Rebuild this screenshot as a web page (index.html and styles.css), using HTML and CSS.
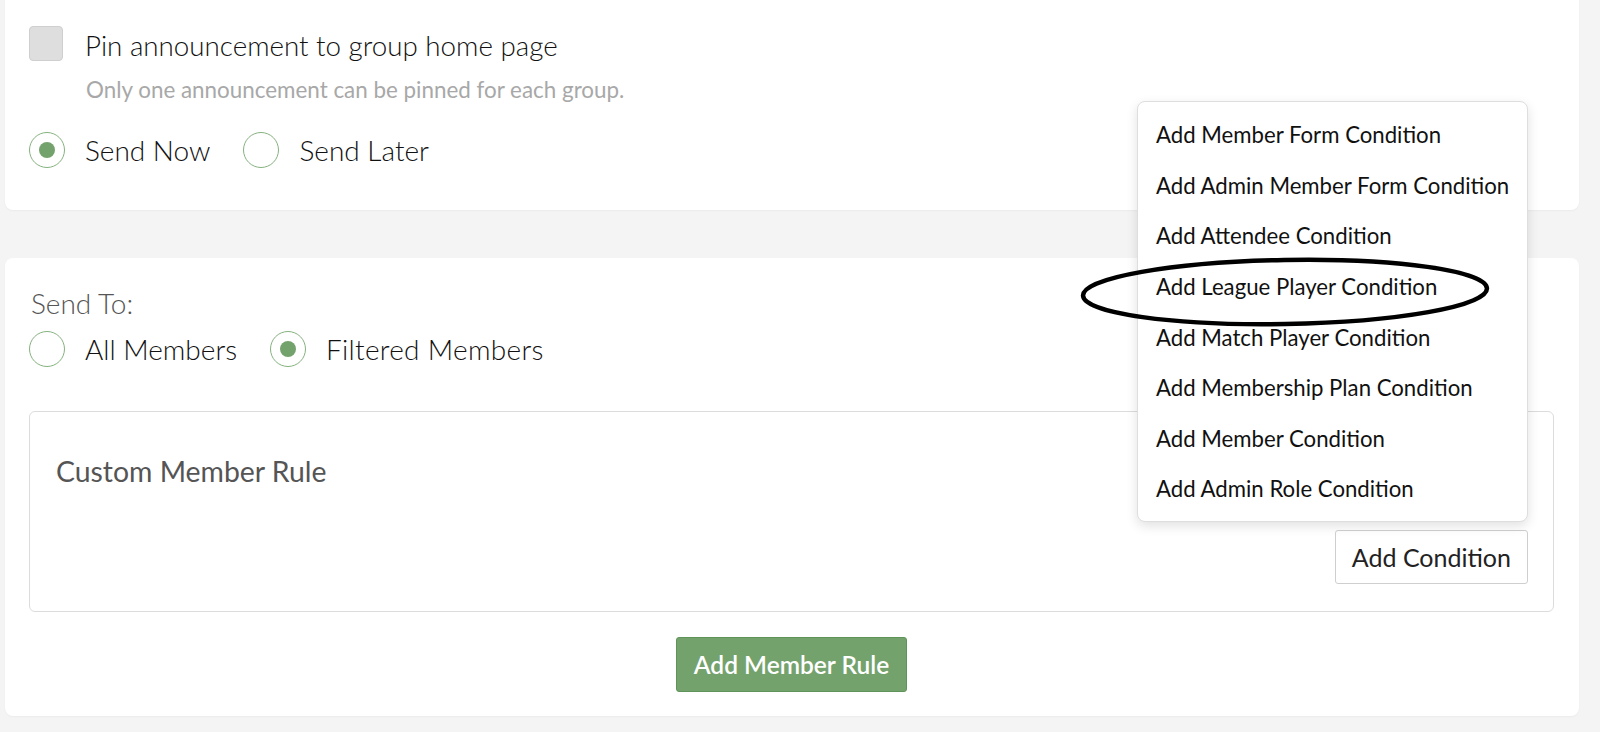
FILE: index.html
```html
<!DOCTYPE html>
<html lang="en">
<head>
<meta charset="utf-8">
<title>Announcement</title>
<link rel="stylesheet" href="styles.css">
</head>
<body>
<div class="page">
  <section class="card card-top">
    <label class="check-row">
      <span class="checkbox"></span>
      <span class="check-label">Pin announcement to group home page</span>
    </label>
    <p class="help">Only one announcement can be pinned for each group.</p>
    <div class="radio-row">
      <label class="radio-opt"><span class="radio checked"></span><span class="radio-label">Send Now</span></label>
      <label class="radio-opt"><span class="radio"></span><span class="radio-label">Send Later</span></label>
    </div>
  </section>

  <section class="card card-bottom">
    <div class="send-to">Send To:</div>
    <div class="radio-row">
      <label class="radio-opt"><span class="radio"></span><span class="radio-label">All Members</span></label>
      <label class="radio-opt"><span class="radio checked"></span><span class="radio-label wide">Filtered Members</span></label>
    </div>
    <div class="rule-box">
      <h3 class="rule-title">Custom Member Rule</h3>
      <div class="rule-actions">
        <div class="dropdown-wrap">
          <ul class="menu">
            <li>Add Member Form Condition</li>
            <li>Add Admin Member Form Condition</li>
            <li>Add Attendee Condition</li>
            <li>Add League Player Condition</li>
            <li>Add Match Player Condition</li>
            <li>Add Membership Plan Condition</li>
            <li>Add Member Condition</li>
            <li>Add Admin Role Condition</li>
          </ul>
          <button class="btn-outline">Add Condition</button>
        </div>
      </div>
    </div>
    <div class="center-row">
      <button class="btn-green">Add Member Rule</button>
    </div>
  </section>

  <svg class="annotation" width="412" height="72" viewBox="0 0 412 72">
    <ellipse cx="206" cy="36" rx="202" ry="32" fill="none" stroke="#000" stroke-width="4.5" transform="rotate(-1 206 36)"/>
  </svg>
</div>
</body>
</html>
```

FILE: styles.css
```css
* { box-sizing: border-box; }
html, body { margin: 0; padding: 0; }
body {
  background: #f4f4f4;
  font-family: Lato, "Open Sans", "Liberation Sans", sans-serif;
  color: #222;
  width: 1600px;
  height: 732px;
  overflow: hidden;
}
.page {
  position: relative;
  display: flow-root;
  padding: 0 21px 0 5px;
}
.card {
  background: #fff;
  border-radius: 8px;
  box-shadow: 0 1px 2px rgba(0,0,0,0.04);
}
.card-top {
  margin-top: -10px;
  padding: 36px 24px 42px;
}
.check-row {
  display: flex;
  align-items: center;
  height: 35px;
}
.checkbox {
  width: 34px;
  height: 35px;
  background: #dedede;
  border: 1px solid #cfcfcf;
  border-radius: 4px;
  flex: none;
}
.check-label {
  margin-left: 22px;
  font-size: 27.75px;
  font-weight: 300;
  color: #111;
  position: relative;
  top: 2px;
}
.help {
  margin: 17px 0 0 57px;
  font-size: 22.4px;
  line-height: 24px;
  color: #a8a8a8;
  font-weight: 400;
}
.radio-row {
  display: flex;
  align-items: center;
}
.card-top .radio-row { margin-top: 30px; }
.radio-opt {
  display: flex;
  align-items: center;
  height: 36px;
  margin-right: 33px;
}
.radio {
  width: 36px;
  height: 36px;
  border-radius: 50%;
  border: 1px solid #86b27f;
  background: #fff;
  position: relative;
  flex: none;
}
.radio.checked::after {
  content: "";
  position: absolute;
  left: 9px;
  top: 9px;
  width: 16px;
  height: 16px;
  border-radius: 50%;
  background: #74a26c;
}
.radio-label {
  margin-left: 20px;
  font-size: 28px;
  font-weight: 300;
  color: #111;
}
.radio-label.wide { letter-spacing: 0.3px; }
.card-bottom {
  margin-top: 48px;
  padding: 30px 25px 24px 24px;
  height: 458px;
}
.send-to {
  font-size: 28px;
  font-weight: 300;
  color: #555;
  line-height: 30px;
  margin-left: 2px;
}
.card-bottom .radio-row { margin-top: 13px; }
.rule-box {
  margin-top: 44px;
  border: 1px solid #dcdcdc;
  border-radius: 6px;
  padding: 26px 25px 27px 26px;
}
.rule-title {
  margin: 18px 0 0 0;
  font-size: 28.4px;
  font-weight: 400;
  line-height: 30px;
  color: #555;
}
.rule-actions {
  display: flex;
  justify-content: flex-end;
  margin-top: 44px;
}
.dropdown-wrap { position: relative; }
.btn-outline {
  font-family: inherit;
  height: 54px;
  padding: 0 16px;
  font-size: 25px;
  color: #222;
  background: #fff;
  border: 1px solid #cfcfcf;
  border-radius: 3px;
}
.menu {
  position: absolute;
  right: 0;
  bottom: calc(100% + 8px);
  width: 391px;
  margin: 0;
  padding: 8px 0 6px;
  list-style: none;
  background: #fff;
  border: 1px solid #dedede;
  border-radius: 8px;
  box-shadow: 0 4px 12px rgba(0,0,0,0.12);
  z-index: 2;
}
.menu li {
  padding-left: 18px;
  line-height: 50.6px;
  font-size: 22.2px;
  color: #111;
  white-space: nowrap;
}
.center-row {
  display: flex;
  justify-content: center;
  margin-top: 25px;
}
.btn-green {
  font-family: inherit;
  height: 55px;
  padding: 0 17px;
  font-size: 24.5px;
  font-weight: 600;
  color: #fff;
  background: #74a26d;
  border: 1px solid #5f9458;
  border-radius: 3px;
}
.annotation {
  position: absolute;
  left: 1079px;
  top: 256px;
  z-index: 3;
}
```
